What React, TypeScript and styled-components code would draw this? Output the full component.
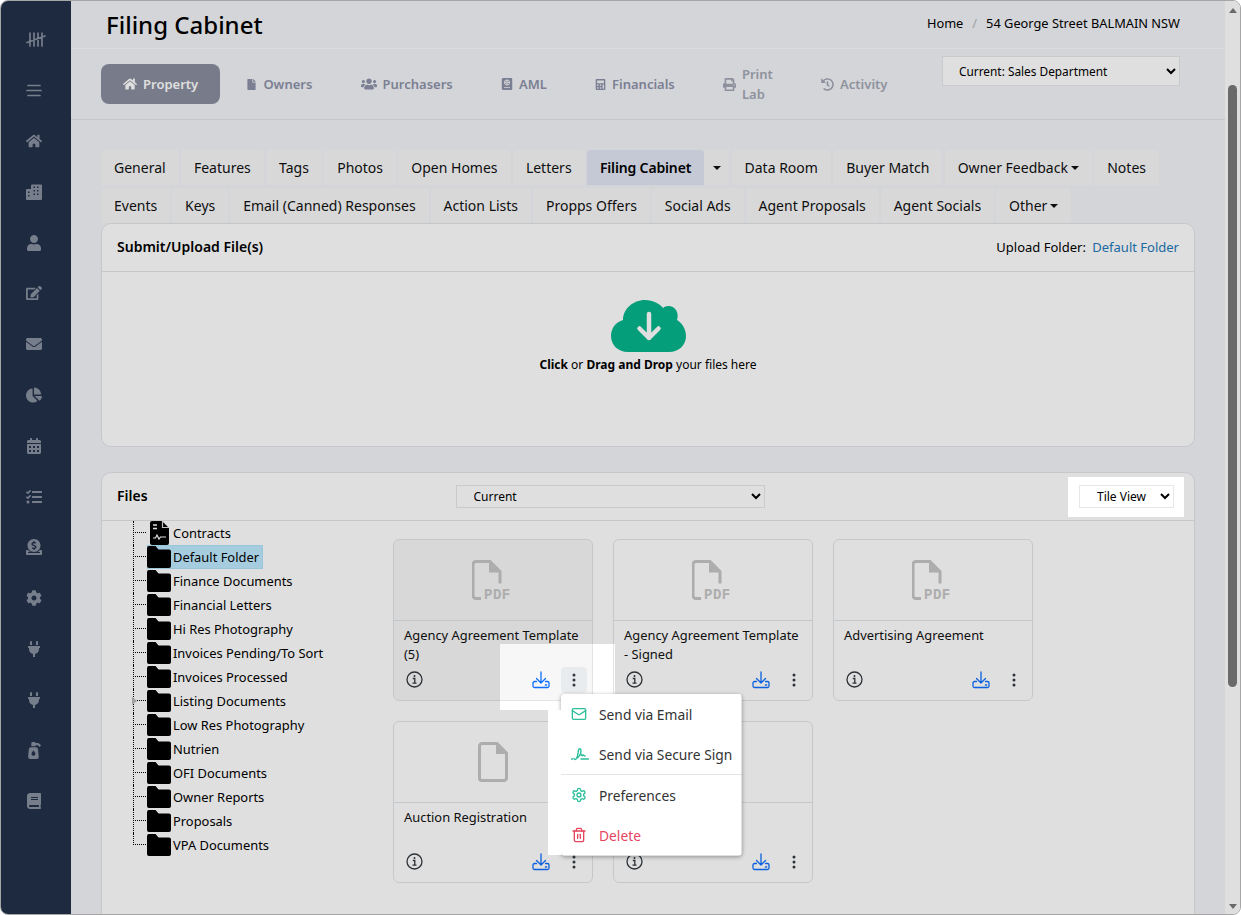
import { ReactNode } from "react";
import styled, { createGlobalStyle } from "styled-components";
import { BsThreeDotsVertical } from "react-icons/bs";
import {
  FaBook,
  FaCalculator,
  FaCalendarAlt,
  FaChartPie,
  FaCog,
  FaDonate,
  FaEdit,
  FaEnvelope,
  FaFile,
  FaHistory,
  FaHome,
  FaPassport,
  FaPlug,
  FaPrint,
  FaPumpSoap,
  FaTasks,
  FaUser,
  FaUsers,
} from "react-icons/fa";
import { LuMail, LuSettings, LuTrash2 } from "react-icons/lu";

const GlobalStyle = createGlobalStyle`
  html, body {
    margin: 0;
    padding: 0;
    background: #fff;
    overflow: hidden;
  }
  * {
    box-sizing: border-box;
  }
  body {
    font-family: "Noto Sans", "Open Sans", sans-serif;
    color: #212529;
  }
`;

const TallyIcon = () => (
  <svg width="20" height="15" viewBox="0 0 20 15" fill="none" stroke="currentColor" strokeWidth="1.7" strokeLinecap="round">
    <path d="M4 1v13M8 1v13M12 1v13M16 1v13M1 10.500 19 4" />
  </svg>
);

const BarsIcon = () => (
  <svg width="16" height="13" viewBox="0 0 16 13" fill="none" stroke="currentColor" strokeWidth="1.7" strokeLinecap="round">
    <path d="M2 1.500h12M1 6.500h14M2 11.500h12" />
  </svg>
);

const CityIcon = () => (
  <svg width="16" height="16" viewBox="0 0 16 16" fill="currentColor" fillRule="evenodd">
    <path d="M1 5h4V1.500A1 1 0 0 1 6 .5h9a1 1 0 0 1 1 1V15a1 1 0 0 1-1 1H1a1 1 0 0 1-1-1V6a1 1 0 0 1 1-1zM2 7.500v1.500h1.500V7.500zM2 11v1.500h1.500V11zM7.500 2.500V4H9V2.500zM11 2.500V4h1.500V2.500zM7.500 6v1.500H9V6zM11 6v1.500h1.500V6zM7.500 9.500V11H9V9.500zM11 9.500V11h1.500V9.500z" />
  </svg>
);

const FolderIcon = () => (
  <svg width="24" height="22" viewBox="0 0 24 22" fill="#000">
    <path d="M2 0h6.500l3 3.500H22a2 2 0 0 1 2 2V20a2 2 0 0 1-2 2H2a2 2 0 0 1-2-2V2a2 2 0 0 1 2-2z" />
  </svg>
);

const ContractIcon = () => (
  <svg width="19" height="24" viewBox="0 0 19 24">
    <path d="M2 0h10l7 7v15a2 2 0 0 1-2 2H2a2 2 0 0 1-2-2V2a2 2 0 0 1 2-2z" fill="#000" />
    <path d="M12.500 0v6.500H19" fill="none" stroke="#dfdfdf" strokeWidth="1.200" />
    <path d="M3 4h4M3 7.500h4" stroke="#fff" strokeWidth="1.400" />
    <path d="M3 17h2.500l1.500-3 2 4 1.500-2H16" fill="none" stroke="#fff" strokeWidth="1.200" />
  </svg>
);

const CloudIcon = () => (
  <svg width="75" height="52" viewBox="0 0 75 52">
    <path
      d="M17 52C7 52 0 45 0 36c0-8 5-14 12-16C12 9 22 0 34 0c8 0 15 4 18 8 3-3 10-3 13 2 2 3 2 7 1 10 5 3 9 9 9 16 0 9-7 16-17 16z"
      fill="#06b58d"
    />
    <path d="M38 14v24M28.500 28.500 38 38l9.500-9.500" fill="none" stroke="#fff" strokeWidth="4.500" strokeLinecap="round" strokeLinejoin="round" />
  </svg>
);

const PdfFileIcon = () => (
  <svg width="42" height="43" viewBox="0 0 42 43" fill="none">
    <g transform="translate(0 1.500)">
      <path d="M9 38H4a3 3 0 0 1-3-3V4a3 3 0 0 1 3-3h14l10 10v12" stroke="#c6c6c6" strokeWidth="3" />
      <path d="M17 1v11h11" fill="#c6c6c6" />
      <text x="12" y="38" fontSize="14" fontWeight="700" letterSpacing="0.5" fill="#c6c6c6" fontFamily="Liberation Mono, monospace">
        PDF
      </text>
    </g>
  </svg>
);

const PlainFileIcon = () => (
  <svg width="30" height="40" viewBox="0 0 30 40" fill="none">
    <path d="M4 1.500h15L28.500 11v25a2.500 2.500 0 0 1-2.500 2.500H4A2.500 2.500 0 0 1 1.500 36V4A2.500 2.500 0 0 1 4 1.500z" stroke="#c6c6c6" strokeWidth="3" />
    <path d="M18 2v10h10z" fill="#c6c6c6" />
  </svg>
);

const InfoIcon = () => (
  <svg width="17" height="17" viewBox="0 0 17 17" fill="none" stroke="#343a40">
    <circle cx="8.500" cy="8.500" r="7.500" strokeWidth="1.300" />
    <path d="M6.800 7.500h2v4.500M6.500 12.200h4" strokeWidth="1.300" />
    <circle cx="8.500" cy="5" r="1" fill="#343a40" stroke="none" />
  </svg>
);

const DownloadIcon = () => (
  <svg width="18" height="18" viewBox="0 0 18 18" fill="none" stroke="#0d6efd" strokeWidth="1.300" strokeLinecap="round" strokeLinejoin="round">
    <path d="M9 1v11M4.500 7.500 9 12l4.500-4.500" />
    <path d="M4.500 10.500H2.500A1.500 1.500 0 0 0 1 12v3a1.500 1.500 0 0 0 1.500 1.500h13A1.500 1.500 0 0 0 17 15v-3a1.500 1.500 0 0 0-1.500-1.500h-2" />
    <path d="M13.500 14h1" strokeWidth="1.600" />
  </svg>
);

const SignIcon = () => (
  <svg width="18" height="14" viewBox="0 0 18 14" fill="none" stroke="currentColor" strokeWidth="1.400" strokeLinecap="round" strokeLinejoin="round">
    <path d="M5.500 11.500C8 10 10 6.500 10 3.500 10 1.500 8 1 7.500 3 7 5.500 7 9 5.500 11.500c-.7 1.300-2 1.300-2.500 0" />
    <path d="M9 8c1.500-1 2-.5 2 .5s1-.5 1.500-.5.5 1 1.500 1" />
    <path d="M10 12h7.500M.5 12h1" />
  </svg>
);

const sidebarIcons: ReactNode[] = [
  <TallyIcon />,
  <BarsIcon />,
  <FaHome size={16} />,
  <CityIcon />,
  <FaUser size={16} />,
  <FaEdit size={16} />,
  <FaEnvelope size={16} />,
  <FaChartPie size={16} />,
  <FaCalendarAlt size={16} />,
  <FaTasks size={16} />,
  <FaDonate size={16} />,
  <FaCog size={16} />,
  <FaPlug size={16} />,
  <FaPlug size={16} />,
  <FaPumpSoap size={17} />,
  <FaBook size={16} />,
];

const navItems: { label: ReactNode; icon: ReactNode; active?: boolean; muted?: boolean }[] = [
  { label: "Property", icon: <FaHome size={14} />, active: true },
  { label: "Owners", icon: <FaFile size={11} /> },
  { label: "Purchasers", icon: <FaUsers size={16} /> },
  { label: "AML", icon: <FaPassport size={12} /> },
  { label: "Financials", icon: <FaCalculator size={11} /> },
  { label: <>Print<br />Lab</>, icon: <FaPrint size={13} />, muted: true },
  { label: "Activity", icon: <FaHistory size={13} />, muted: true },
];

const tabRows: { label: string; active?: boolean; caret?: boolean; split?: boolean }[][] = [
  [
    { label: "General" },
    { label: "Features" },
    { label: "Tags" },
    { label: "Photos" },
    { label: "Open Homes" },
    { label: "Letters" },
    { label: "Filing Cabinet", active: true, split: true },
    { label: "Data Room" },
    { label: "Buyer Match" },
    { label: "Owner Feedback", caret: true },
    { label: "Notes" },
  ],
  [
    { label: "Events" },
    { label: "Keys" },
    { label: "Email (Canned) Responses" },
    { label: "Action Lists" },
    { label: "Propps Offers" },
    { label: "Social Ads" },
    { label: "Agent Proposals" },
    { label: "Agent Socials" },
    { label: "Other", caret: true },
  ],
];

const folders = [
  "Contracts",
  "Default Folder",
  "Finance Documents",
  "Financial Letters",
  "Hi Res Photography",
  "Invoices Pending/To Sort",
  "Invoices Processed",
  "Listing Documents",
  "Low Res Photography",
  "Nutrien",
  "OFI Documents",
  "Owner Reports",
  "Proposals",
  "VPA Documents",
];

const files: { title: string; pdf?: boolean; open?: boolean }[] = [
  { title: "Agency Agreement Template (5)", pdf: true, open: true },
  { title: "Agency Agreement Template - Signed", pdf: true },
  { title: "Advertising Agreement", pdf: true },
  { title: "Auction Registration" },
  { title: "" },
];

export default function App() {
  return (
    <>
      <GlobalStyle />
      <Window>
        <Sidebar>
          {sidebarIcons.map((icon, i) => (
            <SidebarItem key={i}>{icon}</SidebarItem>
          ))}
        </Sidebar>
        <Main>
          <TopBar>
            <PageTitle>Filing Cabinet</PageTitle>
            <Breadcrumb>
              <span>Home</span>
              <BreadcrumbSlash>/</BreadcrumbSlash>
              <span>54 George Street BALMAIN NSW</span>
            </Breadcrumb>
          </TopBar>
          <NavBar>
            <NavList>
              {navItems.map((item, i) => (
                <NavItem key={i} $active={item.active} $muted={item.muted}>
                  {item.icon}
                  <span>{item.label}</span>
                </NavItem>
              ))}
            </NavList>
            <DepartmentSelect defaultValue="sales">
              <option value="sales">Current: Sales Department</option>
            </DepartmentSelect>
          </NavBar>
          <Content>
            <Tabs>
              {tabRows.map((row, r) => (
                <TabRow key={r} $gap={r === 0 ? 2.3 : 1.9}>
                  {row.map((tab) => (
                    <TabGroup key={tab.label}>
                      <Tab $active={tab.active}>
                        {tab.label}
                        {tab.caret && <Caret />}
                      </Tab>
                      {tab.split && (
                        <SplitTab>
                          <Caret />
                        </SplitTab>
                      )}
                    </TabGroup>
                  ))}
                </TabRow>
              ))}
            </Tabs>
            <UploadPanel>
              <PanelHeader>
                <PanelTitle>Submit/Upload File(s)</PanelTitle>
                <UploadFolder>
                  Upload Folder: <FolderLink>Default Folder</FolderLink>
                </UploadFolder>
              </PanelHeader>
              <DropZone>
                <CloudIcon />
                <DropText>
                  <b>Click</b> or <b>Drag and Drop</b> your files here
                </DropText>
              </DropZone>
            </UploadPanel>
            <FilesPanel>
              <FilesHeader>
                <FilesTitle>Files</FilesTitle>
                <SmallSelect $width={309} defaultValue="current">
                  <option value="current">Current</option>
                </SmallSelect>
                <SmallSelect $width={95} defaultValue="tile">
                  <option value="tile">Tile View</option>
                </SmallSelect>
              </FilesHeader>
              <FilesBody>
                <Tree>
                  {folders.map((name, i) => (
                    <TreeRow key={name} $last={i === folders.length - 1} $expandable={name === "Listing Documents"}>
                      <TreeLabel $selected={name === "Default Folder"}>
                        <TreeIcon>{i === 0 ? <ContractIcon /> : <FolderIcon />}</TreeIcon>
                        {name}
                      </TreeLabel>
                    </TreeRow>
                  ))}
                </Tree>
                <FileGrid>
                  {files.map((file, i) => (
                    <FileCard key={i} $open={file.open}>
                      <Thumb>{file.pdf ? <PdfFileIcon /> : <PlainFileIcon />}</Thumb>
                      <FileTitle>{file.title}</FileTitle>
                      <FileActions>
                        <InfoIcon />
                        <ActionsRight>
                          <DownloadIcon />
                          <MoreWrap>
                            <MoreButton $open={file.open}>
                              <BsThreeDotsVertical size={16} />
                            </MoreButton>
                            {file.open && (
                              <Menu>
                                <MenuItem>
                                  <LuMail size={16} />
                                  Send via Email
                                </MenuItem>
                                <MenuItem>
                                  <SignIcon />
                                  Send via Secure Sign
                                </MenuItem>
                                <MenuDivider />
                                <MenuItem>
                                  <LuSettings size={16} />
                                  Preferences
                                </MenuItem>
                                <MenuItem $danger>
                                  <LuTrash2 size={16} />
                                  Delete
                                </MenuItem>
                              </Menu>
                            )}
                          </MoreWrap>
                        </ActionsRight>
                      </FileActions>
                    </FileCard>
                  ))}
                </FileGrid>
              </FilesBody>
            </FilesPanel>
          </Content>
        </Main>
        <Scrollbar>
          <ScrollArrow />
          <ScrollThumb />
          <ScrollArrow $down />
        </Scrollbar>
        <TourOverlay />
      </Window>
    </>
  );
}

const Window = styled.div`
  position: relative;
  display: flex;
  width: 1241px;
  height: 915px;
  border: 1px solid #a6a6a6;
  border-radius: 8px;
  overflow: hidden;
  background: #f3f4f8;
`;

// dims the whole page, leaving holes over the guided-tour targets
const TourOverlay = styled.div`
  position: absolute;
  top: -1px;
  left: -1px;
  width: 1241px;
  height: 915px;
  background: rgba(0, 0, 0, 0.125);
  pointer-events: none;
  clip-path: path(
    evenodd,
    "M0 0H1241V915H0Z M1068 477H1184V517H1068Z M500 644H615V694H741V855H548V710H500Z"
  );
`;

const Sidebar = styled.nav`
  flex: 0 0 70px;
  display: flex;
  flex-direction: column;
  padding: 13px 0 0 25px;
  background: #233049;
  color: #87909f;
`;

const SidebarItem = styled.div`
  display: flex;
  align-items: center;
  height: 50.800px;
  flex: 0 0 auto;

  svg {
    width: auto;
  }
`;

const Main = styled.main`
  flex: 1;
  min-width: 0;
  display: flex;
  flex-direction: column;
  overflow: hidden;
`;

const TopBar = styled.header`
  flex: 0 0 48px;
  display: flex;
  align-items: flex-start;
  justify-content: space-between;
  padding: 0 45px 0 35px;
  border-bottom: 1px solid #fcfcff;
`;

const PageTitle = styled.h1`
  margin: 5px 0 0;
  font-size: 24px;
  line-height: 38px;
  font-weight: 500;
  color: #000;
`;

const Breadcrumb = styled.div`
  display: flex;
  gap: 9px;
  margin-top: 13px;
  font-size: 12.800px;
  line-height: 18px;
  color: #000;
`;

const BreadcrumbSlash = styled.span`
  color: #b5b7bb;
`;

const NavBar = styled.div`
  flex: 0 0 71px;
  display: flex;
  align-items: flex-start;
  justify-content: space-between;
  padding: 7px 45px 0 30px;
  border-bottom: 1px solid #e2e3e6;
`;

const NavList = styled.div`
  display: flex;
  gap: 4.200px;
  margin-top: 8px;
`;

const NavItem = styled.div<{ $active?: boolean; $muted?: boolean }>`
  display: flex;
  align-items: center;
  gap: 6px;
  height: 40px;
  padding: 0 22px;
  border-radius: 8px;
  font-size: 13px;
  line-height: 20px;
  font-weight: 600;
  background: ${({ $active }) => ($active ? "#8a8e9e" : "transparent")};
  color: ${({ $active, $muted }) => ($active ? "#fff" : $muted ? "#a3a7b5" : "#8d92a8")};
`;

const DepartmentSelect = styled.select`
  width: 238px;
  height: 30px;
  padding: 0 8px 0 12px;
  border: 1px solid #e6e7ea;
  background-color: #fff;
  border-radius: 0;
  font-family: inherit;
  font-size: 11.850px;
  color: #000;
`;

const Content = styled.div`
  flex: 1;
  min-height: 0;
  padding: 30px 30px 0;
`;

const Tabs = styled.div`
  display: flex;
  flex-direction: column;
  gap: 3px;
`;

const TabRow = styled.div<{ $gap: number }>`
  display: flex;
  gap: ${({ $gap }) => $gap}px;
`;

const TabGroup = styled.div`
  display: flex;
`;

const Tab = styled.div<{ $active?: boolean }>`
  display: flex;
  align-items: center;
  height: 35px;
  padding: 0 13px;
  border-radius: 4px 4px 0 0;
  font-size: 14px;
  white-space: nowrap;
  font-weight: ${({ $active }) => ($active ? 600 : 400)};
  letter-spacing: ${({ $active }) => ($active ? "-0.15px" : "0")};
  color: ${({ $active }) => ($active ? "#000" : "#111")};
  background: ${({ $active }) => ($active ? "#e1e6f4" : "#f7f7f8")};
`;

const SplitTab = styled.div`
  display: flex;
  align-items: center;
  width: 25px;
  padding-left: 6px;
  background: #f7f7f8;
`;

const Caret = styled.span`
  display: inline-block;
  margin-left: 3px;
  border-top: 4px solid #111;
  border-left: 4px solid transparent;
  border-right: 4px solid transparent;
`;

const PanelBase = styled.section`
  background: #fff;
  border: 1px solid #e2e5e8;
  border-radius: 10px;
`;

const UploadPanel = styled(PanelBase)`
  height: 224px;
  margin-bottom: 25px;
`;

const PanelHeader = styled.div`
  display: flex;
  align-items: center;
  justify-content: space-between;
  height: 48px;
  padding: 0 15px 2px;
  border-bottom: 1px solid #e2e5e8;
`;

const PanelTitle = styled.div`
  font-size: 14px;
  font-weight: 600;
  color: #000;
`;

const UploadFolder = styled.div`
  font-size: 13px;
  color: #000;
`;

const FolderLink = styled.span`
  margin-left: 3px;
  color: #2478b8;
`;

const DropZone = styled.div`
  display: flex;
  flex-direction: column;
  align-items: center;
  padding-top: 28px;
`;

const DropText = styled.div`
  margin-top: 4px;
  font-size: 12px;
  line-height: 18px;
  color: #000;
`;

const FilesPanel = styled(PanelBase)`
  height: 520px;
`;

const FilesHeader = styled.div`
  display: flex;
  align-items: center;
  justify-content: space-between;
  height: 48px;
  padding: 0 20px 0 15px;
  border-bottom: 1px solid #e2e5e8;
`;

const FilesTitle = styled.div`
  width: 24px;
  margin-top: -2px;
  font-size: 14px;
  font-weight: 600;
  color: #000;
`;

const SmallSelect = styled.select<{ $width: number }>`
  width: ${({ $width }) => $width}px;
  height: 23px;
  padding: 0 4px 0 13px;
  border: 1px solid #e6e7ea;
  background-color: #fff;
  border-radius: 0;
  font-family: inherit;
  font-size: 12px;
  color: #000;
`;

const FilesBody = styled.div`
  display: flex;
`;

const Tree = styled.ul`
  flex: 0 0 291px;
  list-style: none;
  margin: 0;
  padding: 0 0 0 31px;
`;

const TreeRow = styled.li<{ $last?: boolean; $expandable?: boolean }>`
  position: relative;
  height: 24px;
  padding-left: 14px;

  &::before {
    content: "";
    position: absolute;
    left: 0;
    top: 0;
    height: ${({ $last }) => ($last ? "12px" : "24px")};
    border-left: 1px dotted #000;
  }

  &::after {
    content: ${({ $expandable }) => ($expandable ? '""' : "none")};
    position: absolute;
    left: -1px;
    top: 8px;
    border-left: 5px solid #b9b9b9;
    border-top: 4px solid transparent;
    border-bottom: 4px solid transparent;
  }
`;

const TreeLabel = styled.div<{ $selected?: boolean }>`
  position: relative;
  display: inline-flex;
  align-items: center;
  height: 24px;
  padding-right: 4px;
  font-size: 12.900px;
  color: #000;
  white-space: nowrap;
  background: ${({ $selected }) => ($selected ? "#beebff" : "transparent")};
  box-shadow: ${({ $selected }) => ($selected ? "inset 0 0 0 1px #aee3fb" : "none")};

  &::before {
    content: "";
    position: absolute;
    left: -14px;
    top: 11px;
    width: 13px;
    border-top: 1px dotted #000;
  }
`;

const TreeIcon = styled.span`
  display: flex;
  align-items: center;
  justify-content: center;
  width: 24px;
  margin-right: 2px;
`;

const FileGrid = styled.div`
  display: grid;
  grid-template-columns: repeat(3, 200px);
  gap: 20px;
  padding-top: 18px;
  align-content: start;
`;

const FileCard = styled.article<{ $open?: boolean }>`
  display: flex;
  flex-direction: column;
  height: 162px;
  border: 1px solid #e2e5e8;
  border-radius: 6px;
  background: ${({ $open }) => ($open ? "#f7f7f7" : "#fff")};
`;

const Thumb = styled.div`
  flex: 0 0 81px;
  display: flex;
  align-items: center;
  justify-content: center;
  border-bottom: 1px solid #e2e5e8;
`;

const FileTitle = styled.div`
  flex: 1;
  padding: 5px 10px 0;
  font-size: 12.900px;
  line-height: 19px;
  color: #111;
`;

const FileActions = styled.div`
  display: flex;
  align-items: center;
  justify-content: space-between;
  padding: 0 5px 7px 12px;

  > svg {
    margin-top: -2px;
  }
`;

const ActionsRight = styled.div`
  display: flex;
  align-items: center;
  gap: 11px;
`;

const MoreWrap = styled.div`
  position: relative;
`;

const MoreButton = styled.div<{ $open?: boolean }>`
  display: flex;
  align-items: center;
  justify-content: center;
  width: 26px;
  height: 26px;
  border-radius: 4px;
  color: #343a40;
  background: ${({ $open }) => ($open ? "#e9ecef" : "transparent")};
`;

const Menu = styled.div`
  position: absolute;
  top: 27px;
  left: 0;
  width: 181px;
  height: 162px;
  background: #fff;
  border-radius: 4px;
  box-shadow: 0 1px 4px rgba(0, 0, 0, 0.35);

  &::before {
    content: "";
    position: absolute;
    left: -13px;
    top: 16px;
    bottom: 1px;
    width: 13px;
    background: #fff;
  }
`;

const MenuItem = styled.div<{ $danger?: boolean }>`
  display: grid;
  grid-template-columns: 18px auto;
  column-gap: 10px;
  align-items: center;
  height: 40px;
  padding-left: 10px;
  font-size: 13.800px;
  white-space: nowrap;
  color: ${({ $danger }) => ($danger ? "#e5455f" : "#333")};

  svg {
    color: ${({ $danger }) => ($danger ? "#e5455f" : "#2cbf9b")};
  }
`;

const MenuDivider = styled.div`
  height: 1px;
  background: #e5e5e5;
`;

const Scrollbar = styled.aside`
  flex: 0 0 15px;
  display: flex;
  flex-direction: column;
  align-items: center;
  justify-content: space-between;
  padding: 7px 0 5px;
  background: #ffffff;
`;

const ScrollArrow = styled.span<{ $down?: boolean }>`
  flex: 0 0 auto;
  border-left: 4px solid transparent;
  border-right: 4px solid transparent;
  border-bottom: ${({ $down }) => ($down ? "0" : "5px solid #7a7a7a")};
  border-top: ${({ $down }) => ($down ? "5px solid #7a7a7a" : "0")};
`;

const ScrollThumb = styled.span`
  width: 9px;
  height: 602px;
  margin: 72px 0 auto;
  border-radius: 5px;
  background: #7a7a7a;
`;
